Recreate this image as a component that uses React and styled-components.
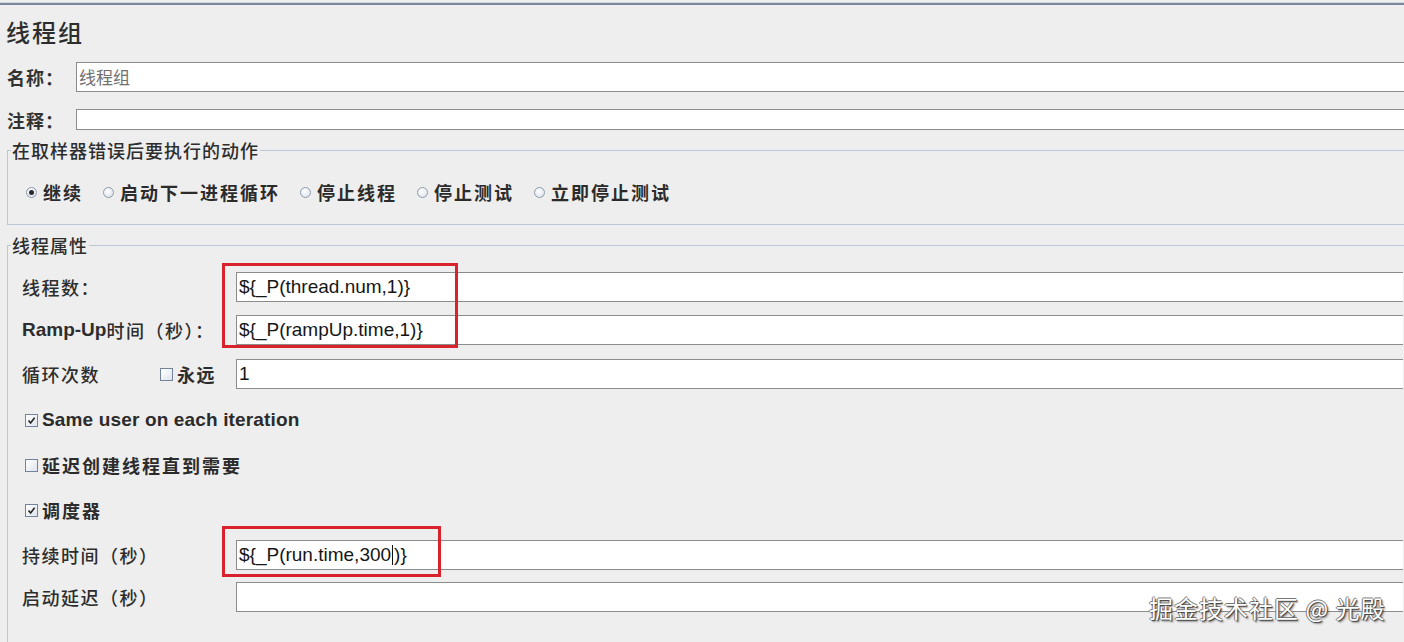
import React from "react";
import styled, { createGlobalStyle } from "styled-components";

const GlobalStyle = createGlobalStyle`
  html, body {
    margin: 0;
    padding: 0;
    background: #eeeeee;
  }
  body {
    font-family: "Noto Sans CJK SC", "Liberation Sans", sans-serif;
    color: #2b2b2b;
    overflow: hidden;
  }
`;

const cjk = `"Noto Sans CJK SC", "Noto Sans CJK JP", sans-serif`;
const latin = `"Liberation Sans", Arial, "Noto Sans CJK SC", sans-serif`;

// 整页
const Page = styled.div`
  position: relative;
  width: 1404px;
  height: 642px;
  overflow: hidden;
  padding-top: 3px;
  box-sizing: border-box;
  background: #eeeeee;
`;

const TopRule = styled.div`
  height: 2px;
  background: #7b8799;
  border-top: 1px solid #cfd6e0;
  margin-top: -1px;
`;

const Title = styled.h1`
  margin: 12px 0 0 6px;
  font-family: ${cjk};
  font-size: 24px;
  line-height: 30px;
  font-weight: 500;
  letter-spacing: 2px;
  color: #2d2d2d;
`;

// 名称 / 注释 行
const TopRow = styled.div`
  display: flex;
  align-items: center;
  height: ${(p) => p.$h}px;
  margin-top: ${(p) => p.$mt}px;
  padding-left: 7px;
`;

const TopLabel = styled.span`
  width: 69px;
  flex: none;
  font-family: ${cjk};
  font-size: 18px;
  line-height: 20px;
  font-weight: 700;
  color: #333;
  letter-spacing: 1px;
`;

const TextField = styled.div`
  flex: 1;
  height: ${(p) => p.$h || 30}px;
  box-sizing: border-box;
  background: #ffffff;
  border: 1px solid #8c8c8c;
  border-right: none;
  display: flex;
  align-items: center;
  padding-left: 2px;
  font-family: ${(p) => (p.$cn ? cjk : latin)};
  font-size: ${(p) => (p.$cn ? 17 : 19)}px;
  line-height: 22px;
  color: ${(p) => (p.$muted ? "#6f6f6f" : "#161616")};
  white-space: nowrap;
`;

const Caret = styled.span`
  display: inline-block;
  width: 1px;
  height: 20px;
  background: #111;
  margin: 0 1px;
`;

// 分组框
const Group = styled.fieldset`
  margin: ${(p) => p.$mt}px -20px 0 7px;
  padding: 0 0 ${(p) => p.$pb}px 0;
  border: 1px solid #b9c7d8;
  ${(p) => p.$open && "border-bottom: none; height: 420px;"}
  min-width: 0;
`;

const Legend = styled.legend`
  margin-left: 3px;
  padding: 0 1px;
  font-family: ${cjk};
  font-size: 18px;
  line-height: 20px;
  height: 20px;
  font-weight: 500;
  color: #2d2d2d;
  letter-spacing: 1px;
`;

const RadioRow = styled.div`
  display: flex;
  align-items: center;
  gap: 20px;
  margin-top: 20px;
  padding-left: 18px;
  height: 24px;
`;

const Choice = styled.label`
  display: flex;
  align-items: center;
  gap: 6px;
  font-family: ${cjk};
  font-size: 18px;
  line-height: 24px;
  font-weight: 700;
  letter-spacing: 2px;
  color: #2b2b2b;
`;

const RadioDot = styled.span`
  width: 11px;
  height: 11px;
  box-sizing: border-box;
  border-radius: 50%;
  border: 1px solid #8d9bab;
  background: radial-gradient(circle at 40% 35%, #ffffff 0%, #e3e8ee 70%, #c9d1da 100%);
  display: flex;
  align-items: center;
  justify-content: center;
  &::after {
    content: "";
    width: 5px;
    height: 5px;
    border-radius: 50%;
    background: ${(p) => (p.$on ? "#2a2a2a" : "transparent")};
  }
`;

const Body = styled.div`
  padding-left: 14px;
  padding-right: 20px;
  display: flex;
  flex-direction: column;
`;

const Row = styled.div`
  display: flex;
  align-items: center;
  height: ${(p) => p.$h || 30}px;
  margin-top: ${(p) => p.$mt}px;
`;

const Label = styled.span`
  width: 214px;
  flex: none;
  display: flex;
  align-items: center;
  font-family: ${cjk};
  font-size: 18px;
  line-height: 22px;
  font-weight: 500;
  letter-spacing: 1.5px;
  color: #2d2d2d;
  white-space: nowrap;
`;

const Latin = styled.span`
  font-family: ${latin};
  font-weight: 700;
  font-size: 19px;
  letter-spacing: 0;
`;

const Forever = styled.span`
  display: flex;
  align-items: center;
  gap: 4px;
  margin-left: 60px;
  font-weight: 700;
`;

const Check = styled.label`
  display: flex;
  align-items: center;
  gap: 4px;
  margin-left: 3px;
  font-family: ${(p) => (p.$latin ? latin : cjk)};
  font-size: ${(p) => (p.$latin ? 19 : 18)}px;
  line-height: 22px;
  font-weight: 700;
  letter-spacing: ${(p) => (p.$latin ? 0.15 : 2)}px;
  color: #2b2b2b;
`;

const Box = styled.span`
  width: 13px;
  height: 13px;
  flex: none;
  box-sizing: border-box;
  border: 1px solid #72839a;
  background: linear-gradient(135deg, #ffffff 0%, #dfe5ec 100%);
  display: flex;
  align-items: center;
  justify-content: center;
`;

// 红框标注
const Mark = styled.div`
  position: absolute;
  border: 3px solid #d8232d;
  box-sizing: border-box;
  pointer-events: none;
`;

const Watermark = styled.div`
  position: absolute;
  left: 1149px;
  top: 593px;
  font-family: ${cjk};
  font-size: 24px;
  line-height: 30px;
  color: #ffffff;
  letter-spacing: 1px;
  text-shadow: 1px 1px 1px #3a3a3a, -1px 0 0 #777, 0 -1px 0 #777, 2px 2px 2px rgba(0, 0, 0, 0.35);
`;

const CheckBox = ({ on }) => (
  <Box>
    {on && (
      <svg width="9" height="9" viewBox="0 0 9 9">
        <path d="M1.5 4.5 L3.6 7 L7.6 1.8" fill="none" stroke="#222" strokeWidth="1.6" />
      </svg>
    )}
  </Box>
);

const actions = ["继续", "启动下一进程循环", "停止线程", "停止测试", "立即停止测试"];

export default function App() {
  return (
    <Page>
      <GlobalStyle />
      <TopRule />
      <Title>线程组</Title>

      <TopRow $mt={15} $h={30}>
        <TopLabel>名称：</TopLabel>
        <TextField $cn $muted>线程组</TextField>
      </TopRow>
      <TopRow $mt={17} $h={21}>
        <TopLabel>注释：</TopLabel>
        <TextField $h={21} />
      </TopRow>

      <Group $mt={10} $pb={20}>
        <Legend>在取样器错误后要执行的动作</Legend>
        <RadioRow>
          {actions.map((a, i) => (
            <Choice key={a}>
              <RadioDot $on={i === 0} />
              {a}
            </Choice>
          ))}
        </RadioRow>
      </Group>

      <Group $mt={10} $pb={0} $open>
        <Legend>线程属性</Legend>
        <Body>
          <Row $mt={17}>
            <Label>线程数：</Label>
            <TextField>{"${_P(thread.num,1)}"}</TextField>
          </Row>
          <Row $mt={13}>
            <Label>
              <Latin>Ramp-Up</Latin>时间（秒）：
            </Label>
            <TextField>{"${_P(rampUp.time,1)}"}</TextField>
          </Row>
          <Row $mt={14}>
            <Label>
              循环次数
              <Forever>
                <CheckBox />
                永远
              </Forever>
            </Label>
            <TextField>1</TextField>
          </Row>
          <Row $mt={16}>
            <Check $latin>
              <CheckBox on />
              Same user on each iteration
            </Check>
          </Row>
          <Row $mt={15}>
            <Check>
              <CheckBox />
              延迟创建线程直到需要
            </Check>
          </Row>
          <Row $mt={15}>
            <Check>
              <CheckBox on />
              调度器
            </Check>
          </Row>
          <Row $mt={15}>
            <Label>持续时间（秒）</Label>
            <TextField>
              {"${_P(run.time,300"}
              <Caret />
              {")}"}
            </TextField>
          </Row>
          <Row $mt={12}>
            <Label>启动延迟（秒）</Label>
            <TextField />
          </Row>
        </Body>
      </Group>

      <Mark style={{ left: 222, top: 263, width: 236, height: 85 }} />
      <Mark style={{ left: 222, top: 526, width: 219, height: 51 }} />
      <Watermark>掘金技术社区 @ 光殿</Watermark>
    </Page>
  );
}
